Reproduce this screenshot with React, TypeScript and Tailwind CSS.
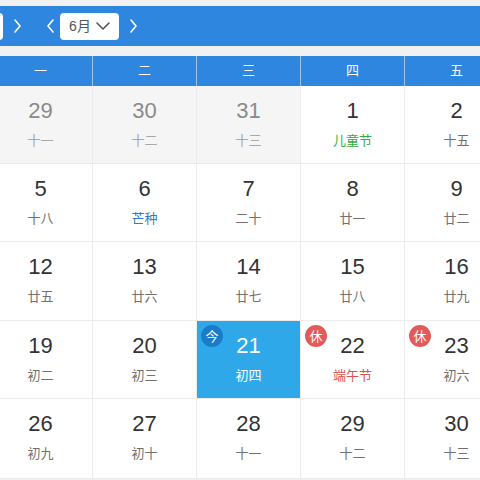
import React from 'react';

type Day = {
  d: number;
  lunar: string;
  other?: boolean;
  tone?: 'green' | 'blue' | 'red';
  today?: boolean;
  rest?: boolean;
};

const weekNames = ['一', '二', '三', '四', '五', '六', '日'];

const weeks: Day[][] = [
  [
    { d: 29, lunar: '十一', other: true },
    { d: 30, lunar: '十二', other: true },
    { d: 31, lunar: '十三', other: true },
    { d: 1, lunar: '儿童节', tone: 'green' },
    { d: 2, lunar: '十五' },
    { d: 3, lunar: '十六' },
    { d: 4, lunar: '十七' },
  ],
  [
    { d: 5, lunar: '十八' },
    { d: 6, lunar: '芒种', tone: 'blue' },
    { d: 7, lunar: '二十' },
    { d: 8, lunar: '廿一' },
    { d: 9, lunar: '廿二' },
    { d: 10, lunar: '廿三' },
    { d: 11, lunar: '廿四' },
  ],
  [
    { d: 12, lunar: '廿五' },
    { d: 13, lunar: '廿六' },
    { d: 14, lunar: '廿七' },
    { d: 15, lunar: '廿八' },
    { d: 16, lunar: '廿九' },
    { d: 17, lunar: '三十' },
    { d: 18, lunar: '五月' },
  ],
  [
    { d: 19, lunar: '初二' },
    { d: 20, lunar: '初三' },
    { d: 21, lunar: '初四', today: true },
    { d: 22, lunar: '端午节', tone: 'red', rest: true },
    { d: 23, lunar: '初六', rest: true },
    { d: 24, lunar: '初七', rest: true },
    { d: 25, lunar: '初八' },
  ],
  [
    { d: 26, lunar: '初九' },
    { d: 27, lunar: '初十' },
    { d: 28, lunar: '十一' },
    { d: 29, lunar: '十二' },
    { d: 30, lunar: '十三' },
    { d: 1, lunar: '十四', other: true },
    { d: 2, lunar: '十五', other: true },
  ],
];

const Chevron = ({ dir }: { dir: 'left' | 'right' | 'down' }) => {
  const d = dir === 'left' ? 'M8 1 L3 7 L8 13' : dir === 'right' ? 'M3 1 L8 7 L3 13' : 'M1 3 L7 9 L13 3';
  const w = dir === 'down' ? 14 : 11;
  const h = dir === 'down' ? 12 : 14;
  return (
    <svg width={w} height={h} viewBox={`0 0 ${w} ${h}`} fill="none">
      <path d={d} stroke="currentColor" strokeWidth="1.6" strokeLinecap="round" strokeLinejoin="round" />
    </svg>
  );
};

const toneClass = (day: Day) => {
  if (day.today) return 'text-white';
  if (day.other) return 'text-[#a8a8a8]';
  if (day.tone === 'green') return 'text-[#3aa846]';
  if (day.tone === 'blue') return 'text-[#2f7cc2]';
  if (day.tone === 'red') return 'text-[#d9534f]';
  return 'text-[#707070]';
};

const Cell = ({ day }: { day: Day }) => (
  <div
    className={`relative flex flex-col items-center border-r border-b border-[#ececec] pt-[12px] ${
      day.today ? 'bg-[#2fa8e9]' : day.other ? 'bg-[#f5f5f5]' : 'bg-white'
    }`}
  >
    {day.today && (
      <span className="absolute left-[4px] top-[4px] flex h-[22px] w-[22px] items-center justify-center rounded-full bg-[#1a7cc8] text-[13px] leading-none text-white">
        今
      </span>
    )}
    {day.rest && (
      <span className="absolute left-[4px] top-[4px] flex h-[22px] w-[22px] items-center justify-center rounded-full bg-[#e25b5b] text-[13px] leading-none text-white">
        休
      </span>
    )}
    <span
      className={`text-[22px] leading-[26px] ${
        day.today ? 'text-white' : day.other ? 'text-[#8a8a8a]' : 'text-[#333]'
      }`}
    >
      {day.d}
    </span>
    <span className={`mt-[8px] text-[13px] leading-[18px] ${toneClass(day)}`}>{day.lunar}</span>
  </div>
);

export default function App() {
  return (
    <div
      className="h-[480px] w-[480px] overflow-hidden bg-[#f1f1f1]"
      style={{ fontFamily: '"Liberation Sans", "Noto Sans CJK SC", sans-serif' }}
    >
      <div className="mt-[6px] flex h-[40px] items-center bg-[#2e86de] text-white">
        <div className="ml-[-40px] h-[27px] w-[43px] rounded-[4px] bg-white" />
        <div className="ml-[9px] flex items-center">
          <Chevron dir="right" />
        </div>
        <div className="ml-[22px] flex items-center">
          <Chevron dir="left" />
        </div>
        <div className="ml-[4px] flex h-[27px] w-[59px] items-center justify-center gap-[5px] rounded-[4px] bg-white text-[14px] text-[#555]">
          <span>6月</span>
          <span className="text-[#555]">
            <Chevron dir="down" />
          </span>
        </div>
        <div className="ml-[9px] flex items-center">
          <Chevron dir="right" />
        </div>
      </div>

      <div className="mt-[10px] ml-[-11px] w-[728px]">
        <div className="grid h-[30px] grid-cols-[repeat(7,104px)] bg-[#2e86de]">
          {weekNames.map((n) => (
            <div
              key={n}
              className="flex items-center justify-center border-r border-[#9fc3ea] text-[13px] text-white"
            >
              {n}
            </div>
          ))}
        </div>
        <div className="grid grid-cols-[repeat(7,104px)] grid-rows-[78px_78px_79px_78px_80px]">
          {weeks.flat().map((day, i) => (
            <Cell key={i} day={day} />
          ))}
        </div>
      </div>
    </div>
  );
}
